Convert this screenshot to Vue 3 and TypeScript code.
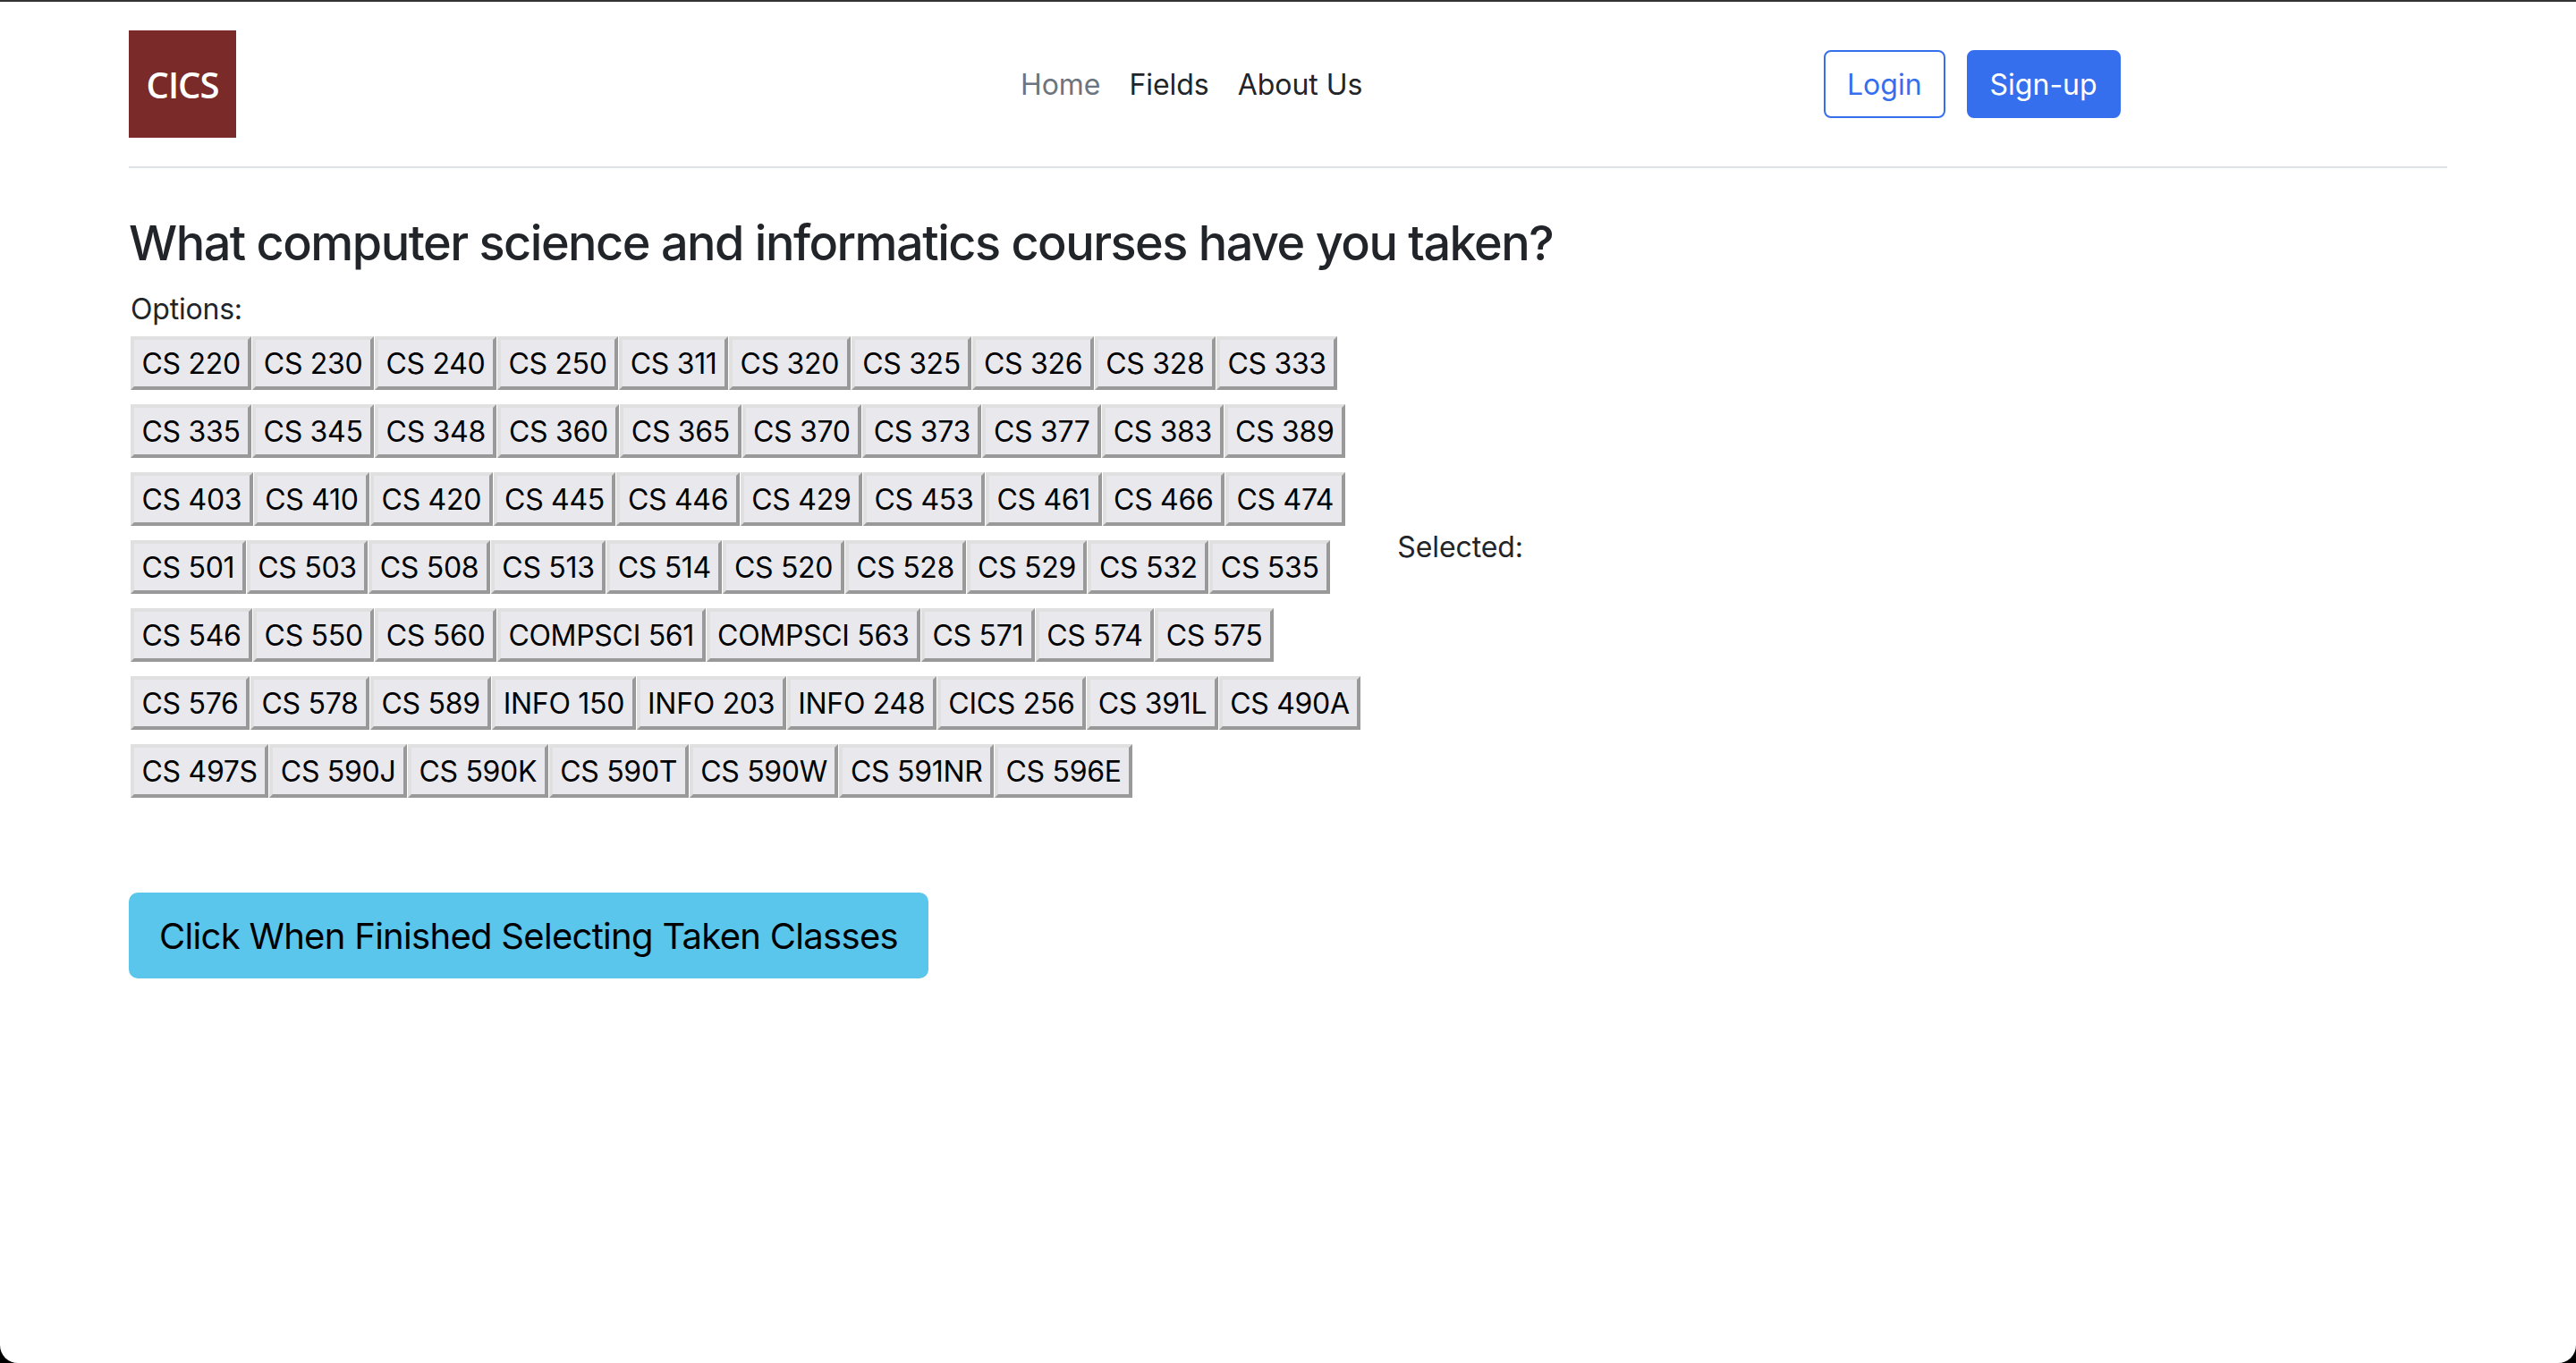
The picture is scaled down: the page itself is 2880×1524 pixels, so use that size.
<script setup lang="ts">
const rows: string[][] = [
  ["CS 220", "CS 230", "CS 240", "CS 250", "CS 311", "CS 320", "CS 325", "CS 326", "CS 328", "CS 333"],
  ["CS 335", "CS 345", "CS 348", "CS 360", "CS 365", "CS 370", "CS 373", "CS 377", "CS 383", "CS 389"],
  ["CS 403", "CS 410", "CS 420", "CS 445", "CS 446", "CS 429", "CS 453", "CS 461", "CS 466", "CS 474"],
  ["CS 501", "CS 503", "CS 508", "CS 513", "CS 514", "CS 520", "CS 528", "CS 529", "CS 532", "CS 535"],
  ["CS 546", "CS 550", "CS 560", "COMPSCI 561", "COMPSCI 563", "CS 571", "CS 574", "CS 575"],
  ["CS 576", "CS 578", "CS 589", "INFO 150", "INFO 203", "INFO 248", "CICS 256", "CS 391L", "CS 490A"],
  ["CS 497S", "CS 590J", "CS 590K", "CS 590T", "CS 590W", "CS 591NR", "CS 596E"],
];
const links = ["Home", "Fields", "About Us"];
</script>

<template>
  <div class="window">
    <div class="container">
      <header class="header">
        <div class="logo">CICS</div>
        <nav class="nav">
          <a v-for="(link, i) in links" :key="link" class="nav-link" :class="{ active: i === 0 }">{{ link }}</a>
        </nav>
        <div class="actions">
          <button class="btn btn-outline">Login</button>
          <button class="btn btn-primary">Sign-up</button>
        </div>
      </header>

      <h3 class="title">What computer science and informatics courses have you taken?</h3>

      <div class="picker">
        <div class="options">
          <div class="label">Options:</div>
          <div v-for="(row, r) in rows" :key="r" class="course-row">
            <button v-for="course in row" :key="course" class="course">{{ course }}</button>
          </div>
        </div>
        <div class="selected">Selected:</div>
      </div>

      <button class="finish">Click When Finished Selecting Taken Classes</button>
    </div>
  </div>
</template>

<style>
html,
body {
  background: #000;
}
</style>

<style scoped>
.window {
  box-sizing: border-box;
  height: 1524px;
  background: #fff;
  border-top: 2px solid #333;
  border-radius: 0 0 20px 20px;
  overflow: hidden;
  font-family: Inter, "Liberation Sans", sans-serif;
  color: #212529;
}

.container {
  width: 2592px;
  margin: 0 auto 0 144px;
}

.header {
  display: grid;
  grid-template-columns: 997px 898px 1fr;
  align-items: center;
  height: 186px;
  padding-top: 32px;
  padding-bottom: 32px;
  box-sizing: border-box;
  border-bottom: 2px solid #dee2e6;
}

.logo {
  width: 120px;
  height: 120px;
  background: #7a2a28;
  color: #fff;
  font-family: "Open Sans", sans-serif;
  font-weight: 600;
  font-size: 40px;
  letter-spacing: -1px;
  display: flex;
  align-items: center;
  justify-content: center;
}

.nav {
  display: flex;
  gap: 32px;
  font-size: 32px;
  letter-spacing: -0.05px;
}

.nav-link {
  color: #212529;
}

.nav-link.active {
  color: #6c757d;
}

.actions {
  display: flex;
  gap: 24px;
}

.btn {
  box-sizing: border-box;
  height: 76px;
  padding: 0 24px;
  font-family: inherit;
  font-size: 32px;
  border-radius: 8px;
  border: 2px solid #356fee;
}

.btn-outline {
  background: #fff;
  color: #356fee;
}

.btn-primary {
  background: #356fee;
  color: #fff;
}

.title {
  margin: 50px 0 0;
  font-size: 54px;
  line-height: 67px;
  font-weight: 500;
  letter-spacing: -1.5px;
}

.picker {
  display: flex;
  align-items: center;
  gap: 40px;
  margin-top: 21px;
  padding-left: 2px;
}

.label {
  font-size: 32px;
  line-height: 40px;
  letter-spacing: -0.2px;
  margin-bottom: 10px;
}

.course-row {
  display: flex;
  margin-bottom: 16px;
}

.course {
  box-sizing: border-box;
  height: 60px;
  padding: 0 8.5px;
  font-family: Inter, "Liberation Sans", sans-serif;
  font-size: 32px;
  letter-spacing: -0.3px;
  color: #000;
  background: #e9e9ed;
  border-style: solid;
  border-width: 4px;
  border-color: #e0e0e0 #999 #999 #e0e0e0;
  margin-right: 1px;
}

.selected {
  font-size: 32px;
  letter-spacing: -0.1px;
  margin-bottom: 12px;
}

.finish {
  display: block;
  box-sizing: border-box;
  height: 96px;
  margin-top: 90px;
  padding: 0 34px;
  border: none;
  border-radius: 10px;
  background: #5bc6ec;
  color: #000;
  font-family: inherit;
  font-size: 40px;
  letter-spacing: -0.7px;
}
</style>
